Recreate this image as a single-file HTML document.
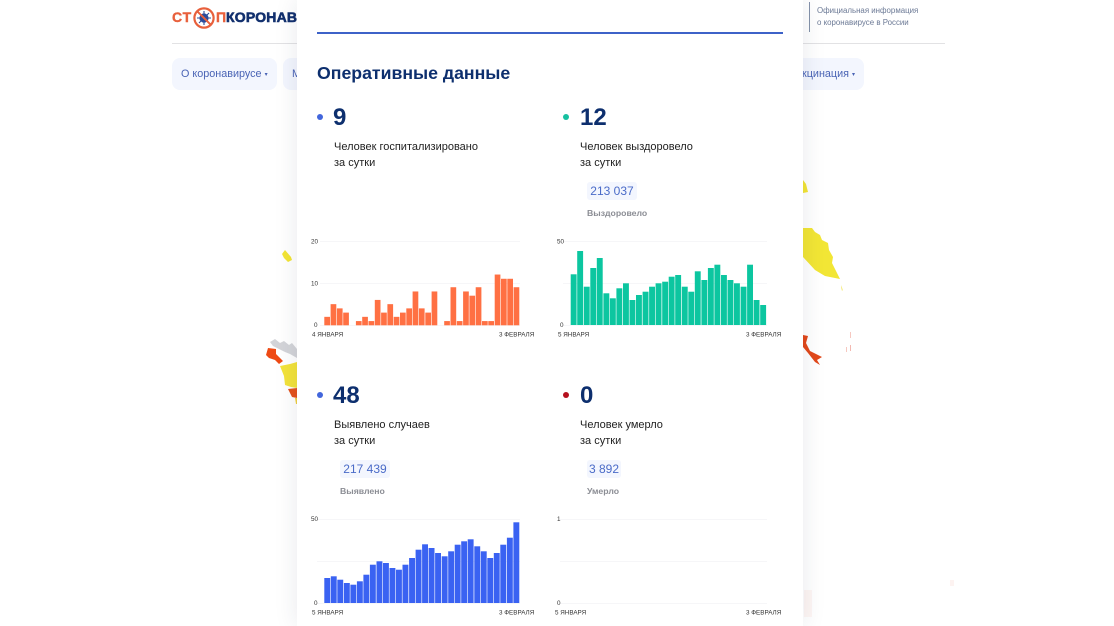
<!DOCTYPE html>
<html lang="ru">
<head>
<meta charset="utf-8">
<title>Оперативные данные</title>
<style>
html,body{margin:0;padding:0;background:#fff;width:1114px;height:626px;overflow:hidden}
body{position:relative;font-family:"Liberation Sans",sans-serif}
.a{position:absolute;white-space:nowrap}
.nav{position:absolute;top:58px;height:32px;background:#f3f6fe;border-radius:8px;color:#4a64b5;font-size:10.8px;line-height:32px}
.tri{font-size:6px;vertical-align:1px;margin-left:3px}
#modal{position:absolute;left:297px;top:0;width:506px;height:626px;background:#fff;box-shadow:0 0 22px rgba(30,40,70,.10)}
.dot{position:absolute;width:6px;height:6px;border-radius:50%}
.num{position:absolute;font-size:24px;font-weight:bold;color:#0d2f6e;line-height:28px;white-space:nowrap}
.txt{position:absolute;font-size:11px;line-height:16px;color:#222;white-space:nowrap}
.pill{position:absolute;height:18px;line-height:18px;background:#f3f6fe;border-radius:3px;color:#4a6bc8;font-size:12px;text-align:center}
.lab{position:absolute;font-size:8.7px;font-weight:bold;color:#8b8d94;line-height:12px;white-space:nowrap}
svg text{font-family:"Liberation Sans",sans-serif;font-size:6.3px;fill:#333}
</style>
</head>
<body>
<!-- map fragments -->
<svg class="a" style="left:0;top:0" width="1114" height="626" viewBox="0 0 1114 626">
<polygon points="282,254 285,250 291,257 292,260 288,262 284,258" fill="#f3e534"/>
<polygon points="270,342 275,339 280,343 284,341 289,345 292,343 297,349 297,358 290,354 285,352 279,349 273,346" fill="#d3d4d8"/>
<polygon points="268,348 276,349 276,354 280,358 283,361 279,364 275,360 269,358 266,355" fill="#ee4a14"/>
<polygon points="280,366 290,364 297,362 297,388 291,387 285,385 284,376" fill="#f3e33a"/>
<polygon points="288,389 297,388 297,398 292,397" fill="#e5521c"/>
<polygon points="295,398 297,398 297,404 296,404" fill="#f0d040"/>
<polygon points="803,180 806,184 808,192 803,193" fill="#f3e534"/>
<polygon points="803,228 812,228 815,232 820,235 822,240 828,243 829,250 833,257 832,263 840,279 835,278 825,276 815,270 803,257" fill="#f2e635"/>
<polygon points="841,285 843,290 842,291 841,288" fill="#f6ee90"/>
<polygon points="803,335 808,336 806,343 810,351 822,357 817,360 820,365 815,362 808,353 803,347" fill="#e2481a"/>
<rect x="850" y="332" width="1" height="6" fill="#f6c8c0"/>
<rect x="850" y="345" width="1" height="6" fill="#f3b8b0"/>
<rect x="846" y="347" width="1" height="5" fill="#f6c8c0"/>
<rect x="804" y="590" width="8" height="27" fill="#fef6f4"/>
<rect x="950" y="580" width="4" height="6" fill="#fdf3f1"/>
</svg>

<!-- header -->
<div class="a" style="left:172px;top:9px;font-size:14px;font-weight:bold;color:#e8603c;line-height:17px;letter-spacing:.9px;-webkit-text-stroke:.4px #e8603c">СТ</div>
<svg class="a" style="left:192px;top:6px" width="24" height="24" viewBox="0 0 24 24">
<circle cx="12" cy="12" r="9.6" fill="#fff" stroke="#e8603c" stroke-width="2.2"/>
<circle cx="12" cy="12" r="4.6" fill="#2b4a9a"/>
<g stroke="#2b4a9a" stroke-width="1.1"><path d="M12 5v14M5 12h14M7 7l10 10M17 7L7 17"/></g>
<path d="M5.4 5.4L18.6 18.6" stroke="#e8603c" stroke-width="2"/>
</svg>
<div class="a" style="left:216px;top:9px;font-size:14px;font-weight:bold;color:#e8603c;line-height:17px;-webkit-text-stroke:.4px #e8603c">П</div>
<div class="a" style="left:226px;top:9px;font-size:14px;font-weight:bold;color:#12306e;line-height:17px;letter-spacing:.2px;-webkit-text-stroke:.6px #12306e">КОРОНАВИРУС</div>
<div class="a" style="left:172px;top:43px;width:773px;height:1px;background:#e2e2e4"></div>
<div class="a" style="left:809px;top:2px;width:1px;height:30px;background:#8592aa"></div>
<div class="a" style="left:817px;top:5px;font-size:7.9px;line-height:12px;color:#6c7a96;white-space:normal;width:125px">Официальная информация<br>о коронавирусе в России</div>

<div class="nav" style="left:172px;width:105px;text-indent:9px">О коронавирусе<span class="tri">▾</span></div>
<div class="nav" style="left:283px;width:40px;text-indent:9px">М</div>
<div class="nav" style="left:760px;width:104px;text-align:right;box-sizing:border-box;padding-right:9px">Вакцинация<span class="tri">▾</span></div>

<!-- modal -->
<div id="modal"></div>
<div class="a" style="left:317px;top:32px;width:466px;height:2px;background:#3d62c8"></div>
<div class="a" style="left:317px;top:62px;font-size:17.7px;line-height:22px;font-weight:bold;color:#0d2f6e">Оперативные данные</div>

<div class="dot" style="left:317px;top:114px;background:#4266dc"></div>
<div class="num" style="left:333px;top:104px">9</div>
<div class="txt" style="left:334px;top:139px">Человек госпитализировано<br>за сутки</div>

<div class="dot" style="left:563px;top:114px;background:#16c0a0"></div>
<div class="num" style="left:580px;top:104px">12</div>
<div class="txt" style="left:580px;top:139px">Человек выздоровело<br>за сутки</div>
<div class="pill" style="left:587px;top:182px;width:50px">213 037</div>
<div class="lab" style="left:587px;top:207px">Выздоровело</div>

<div class="dot" style="left:317px;top:392px;background:#4266dc"></div>
<div class="num" style="left:333px;top:382px">48</div>
<div class="txt" style="left:334px;top:417px">Выявлено случаев<br>за сутки</div>
<div class="pill" style="left:340px;top:460px;width:50px">217 439</div>
<div class="lab" style="left:340px;top:485px">Выявлено</div>

<div class="dot" style="left:563px;top:392px;background:#b5101e"></div>
<div class="num" style="left:580px;top:382px">0</div>
<div class="txt" style="left:580px;top:417px">Человек умерло<br>за сутки</div>
<div class="pill" style="left:587px;top:460px;width:34px">3 892</div>
<div class="lab" style="left:587px;top:485px">Умерло</div>

<svg class="a" style="left:0;top:0" width="1114" height="626" viewBox="0 0 1114 626">
<!-- chart 1 -->
<g stroke="#f6f6f8" stroke-width="1"><path d="M320 241.5H520M320 283.5H520M320 325.5H520"/></g>
<text x="311" y="243.5">20</text><text x="311" y="285.5">10</text><text x="314" y="327">0</text>
<text x="312" y="336.5">4 ЯНВАРЯ</text><text x="499" y="336.5">3 ФЕВРАЛЯ</text>
<g fill="#ff7043" transform="translate(0,325.3) scale(1,-4.23)">
<rect x="324.3" width="5.7" height="2"/><rect x="330.6" width="5.7" height="5"/><rect x="336.9" width="5.7" height="4"/><rect x="343.2" width="5.7" height="3"/>
<rect x="355.9" width="5.7" height="1"/><rect x="362.2" width="5.7" height="2"/><rect x="368.5" width="5.7" height="1"/><rect x="374.8" width="5.7" height="6"/><rect x="381.1" width="5.7" height="3"/><rect x="387.4" width="5.7" height="5"/><rect x="393.7" width="5.7" height="2"/><rect x="400" width="5.7" height="3"/><rect x="406.3" width="5.7" height="4"/><rect x="412.6" width="5.7" height="8"/><rect x="418.9" width="5.7" height="4"/><rect x="425.3" width="5.7" height="3"/><rect x="431.6" width="5.7" height="8"/>
<rect x="444.2" width="5.7" height="1"/><rect x="450.5" width="5.7" height="9"/><rect x="456.8" width="5.7" height="1"/><rect x="463.1" width="5.7" height="8"/><rect x="469.4" width="5.7" height="7"/><rect x="475.7" width="5.7" height="9"/><rect x="482" width="5.7" height="1"/><rect x="488.3" width="5.7" height="1"/><rect x="494.7" width="5.7" height="12"/><rect x="501" width="5.7" height="11"/><rect x="507.3" width="5.7" height="11"/><rect x="513.6" width="5.7" height="9"/>
</g>
<!-- chart 2 -->
<g stroke="#f6f6f8" stroke-width="1"><path d="M563 241.5H767M563 283.5H767M563 325.5H767"/></g>
<text x="557" y="243.5">50</text><text x="560" y="327">0</text>
<text x="558" y="336.5">5 ЯНВАРЯ</text><text x="746" y="336.5">3 ФЕВРАЛЯ</text>
<g fill="#0cc6a0" transform="translate(0,325) scale(1,-1)">
<rect x="570.7" width="5.9" height="50.7"/><rect x="577.2" width="5.9" height="74"/><rect x="583.8" width="5.9" height="38.3"/><rect x="590.3" width="5.9" height="57"/><rect x="596.8" width="5.9" height="67"/><rect x="603.4" width="5.9" height="31.7"/><rect x="609.9" width="5.9" height="26.7"/><rect x="616.4" width="5.9" height="36.7"/><rect x="623" width="5.9" height="41.7"/><rect x="629.5" width="5.9" height="25"/><rect x="636" width="5.9" height="30"/><rect x="642.6" width="5.9" height="33.3"/><rect x="649.1" width="5.9" height="38.3"/><rect x="655.6" width="5.9" height="41.7"/><rect x="662.2" width="5.9" height="43.3"/><rect x="668.7" width="5.9" height="48.3"/><rect x="675.2" width="5.9" height="50"/><rect x="681.8" width="5.9" height="38.3"/><rect x="688.3" width="5.9" height="33.3"/><rect x="694.8" width="5.9" height="53.7"/><rect x="701.4" width="5.9" height="45"/><rect x="707.9" width="5.9" height="57"/><rect x="714.4" width="5.9" height="60.3"/><rect x="721" width="5.9" height="50"/><rect x="727.5" width="5.9" height="45"/><rect x="734" width="5.9" height="41.7"/><rect x="740.6" width="5.9" height="38.3"/><rect x="747.1" width="5.9" height="60.3"/><rect x="753.6" width="5.9" height="25"/><rect x="760.2" width="5.9" height="20"/>
</g>
<!-- chart 3 -->
<g stroke="#f6f6f8" stroke-width="1"><path d="M317 519.5H520M317 561.5H520M317 603.5H520"/></g>
<text x="311" y="521">50</text><text x="314" y="605">0</text>
<text x="312" y="614.5">5 ЯНВАРЯ</text><text x="499" y="614.5">3 ФЕВРАЛЯ</text>
<g fill="#3a62f2" transform="translate(0,603) scale(1,-1)">
<rect x="324.3" width="5.9" height="25"/><rect x="330.8" width="5.9" height="26.7"/><rect x="337.3" width="5.9" height="23.3"/><rect x="343.9" width="5.9" height="20"/><rect x="350.4" width="5.9" height="18.3"/><rect x="356.9" width="5.9" height="21.7"/><rect x="363.4" width="5.9" height="28.3"/><rect x="369.9" width="5.9" height="38.3"/><rect x="376.5" width="5.9" height="41.7"/><rect x="383" width="5.9" height="40"/><rect x="389.5" width="5.9" height="35"/><rect x="396" width="5.9" height="33.3"/><rect x="402.5" width="5.9" height="38.3"/><rect x="409.1" width="5.9" height="45"/><rect x="415.6" width="5.9" height="53.3"/><rect x="422.1" width="5.9" height="58.7"/><rect x="428.6" width="5.9" height="55"/><rect x="435.1" width="5.9" height="50"/><rect x="441.7" width="5.9" height="46.7"/><rect x="448.2" width="5.9" height="51.7"/><rect x="454.7" width="5.9" height="58.3"/><rect x="461.2" width="5.9" height="61.7"/><rect x="467.7" width="5.9" height="63.7"/><rect x="474.3" width="5.9" height="56.7"/><rect x="480.8" width="5.9" height="51.7"/><rect x="487.3" width="5.9" height="45"/><rect x="493.8" width="5.9" height="50"/><rect x="500.3" width="5.9" height="58.3"/><rect x="506.9" width="5.9" height="65.3"/><rect x="513.4" width="5.9" height="80.7"/>
</g>
<!-- chart 4 -->
<g stroke="#f6f6f8" stroke-width="1"><path d="M560 519.5H767M560 561.5H767M560 603.5H767"/></g>
<text x="557" y="521">1</text><text x="557" y="605">0</text>
<text x="555" y="614.5">5 ЯНВАРЯ</text><text x="746" y="614.5">3 ФЕВРАЛЯ</text>
</svg>
</body>
</html>
